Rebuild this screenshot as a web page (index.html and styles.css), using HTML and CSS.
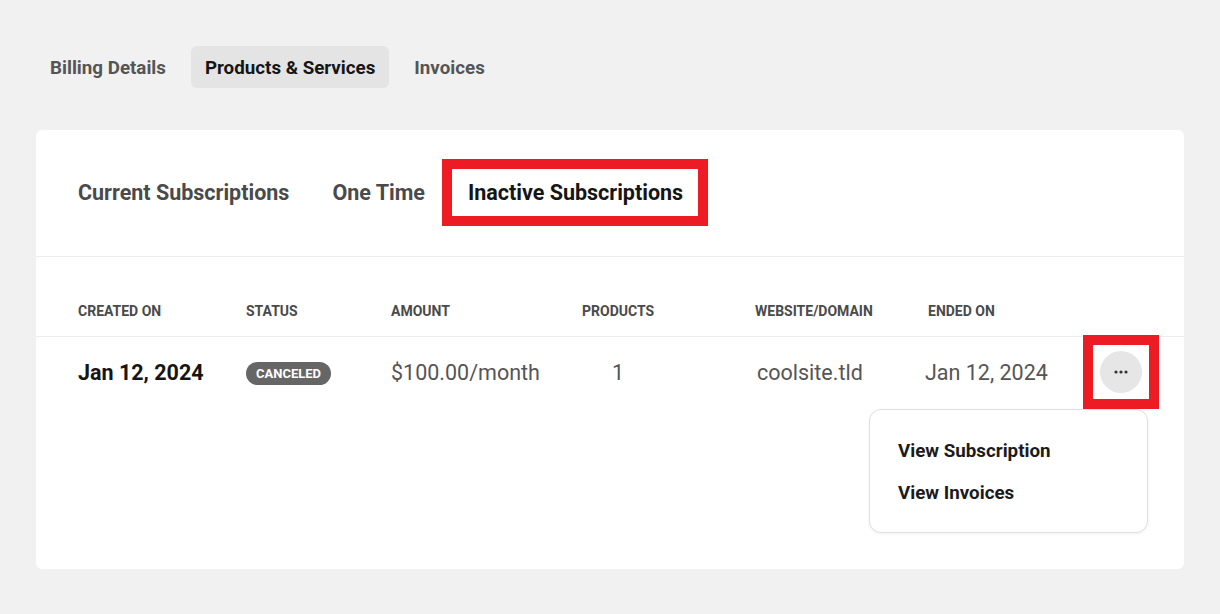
FILE: index.html
```html
<!DOCTYPE html>
<html lang="en">
<head>
<meta charset="utf-8">
<title>Products &amp; Services</title>
<link rel="stylesheet" href="styles.css">
</head>
<body>
<div class="page">
  <nav class="top-tabs">
    <span class="top-tab">Billing Details</span>
    <span class="top-tab active">Products &amp; Services</span>
    <span class="top-tab">Invoices</span>
  </nav>
  <section class="card">
    <div class="sub-tabs">
      <span class="sub-tab">Current Subscriptions</span>
      <span class="sub-tab">One Time</span>
      <span class="sub-tab active highlight">Inactive Subscriptions</span>
    </div>
    <div class="table">
      <div class="row head">
        <div class="cell">Created On</div>
        <div class="cell">Status</div>
        <div class="cell">Amount</div>
        <div class="cell">Products</div>
        <div class="cell">Website/Domain</div>
        <div class="cell">Ended On</div>
        <div class="cell"></div>
      </div>
      <div class="row data">
        <div class="cell date-strong">Jan 12, 2024</div>
        <div class="cell"><span class="badge">Canceled</span></div>
        <div class="cell">$100.00/month</div>
        <div class="cell products">1</div>
        <div class="cell website">coolsite.tld</div>
        <div class="cell ended">Jan 12, 2024</div>
        <div class="cell action">
          <div class="action-box">
            <button class="more" type="button" aria-label="More">
              <svg width="14" height="4" viewBox="0 0 14 4"><circle cx="2" cy="2" r="1.6" fill="#333"/><circle cx="7" cy="2" r="1.6" fill="#333"/><circle cx="12" cy="2" r="1.6" fill="#333"/></svg>
            </button>
            <div class="menu">
              <div class="menu-item">View Subscription</div>
              <div class="menu-item">View Invoices</div>
            </div>
          </div>
        </div>
      </div>
    </div>
  </section>
</div>
</body>
</html>
```

FILE: styles.css
```css
* { box-sizing: border-box; }

html, body {
  margin: 0;
  background: #f1f1f1;
  font-family: Roboto, "Noto Sans", Arial, sans-serif;
}

.page {
  padding: 46px 36px 0;
}

.top-tabs {
  display: flex;
  gap: 11px;
}

.top-tab {
  height: 42px;
  line-height: 44px;
  padding: 0 14px;
  font-size: 18.75px;
  font-weight: 700;
  color: #555;
  border-radius: 6px;
}

.top-tab.active {
  background: #e4e4e4;
  color: #151515;
}

.card {
  margin-top: 42px;
  width: 1148px;
  height: 439px;
  background: #fff;
  border-radius: 6px;
}

.sub-tabs {
  display: flex;
  gap: 43px;
  padding: 39px 42px 40px;
  border-bottom: 1px solid #ededed;
}

.sub-tab {
  height: 47px;
  line-height: 48px;
  font-size: 21.5px;
  font-weight: 700;
  color: #4a4a4a;
}

.sub-tab.active {
  color: #151515;
}

.sub-tab.highlight {
  height: 67px;
  line-height: 48px;
  margin: -10px -25px -10px -26px;
  padding: 0 15px 0 16px;
  border: 10px solid #ed1c24;
}

.row {
  display: grid;
  grid-template-columns: 168px 145px 191px 173px 173px 155px 1fr;
  align-items: center;
  padding-left: 42px;
}

.row.head {
  height: 80px;
  padding-top: 44px;
  padding-bottom: 16px;
  border-bottom: 1px solid #ededed;
  font-size: 14px;
  font-weight: 700;
  text-transform: uppercase;
  color: #4a4a4a;
}

.row.data {
  height: 71px;
  font-size: 21.5px;
  color: #555;
}

.date-strong {
  font-weight: 700;
  color: #151515;
}

.badge {
  display: inline-block;
  height: 23px;
  line-height: 24px;
  padding: 0 10px;
  border-radius: 12px;
  background: #666;
  color: #fff;
  font-size: 13px;
  font-weight: 700;
  text-transform: uppercase;
  vertical-align: middle;
}

.products { padding-left: 30px; }
.website { padding-left: 2px; }
.ended { margin-left: -3px; }

.action {
  display: flex;
}

.action-box {
  position: relative;
  border: 10px solid #ed1c24;
  padding: 6px 7px;
  margin: -2px 0 -1px;
}

.more {
  display: flex;
  align-items: center;
  justify-content: center;
  width: 42px;
  height: 42px;
  padding: 0;
  border: 0;
  border-radius: 50%;
  background: #e6e6e6;
}

.menu {
  position: absolute;
  top: calc(100% + 10px);
  right: 1px;
  width: 279px;
  height: 124px;
  padding: 20px 0 20px 28px;
  background: #fff;
  border: 1px solid #e0e0e0;
  border-radius: 12px;
  box-shadow: 0 1px 3px rgba(0, 0, 0, 0.06);
}

.menu-item {
  height: 42px;
  line-height: 42px;
  font-size: 18.75px;
  font-weight: 700;
  color: #1b1b1b;
}
```
